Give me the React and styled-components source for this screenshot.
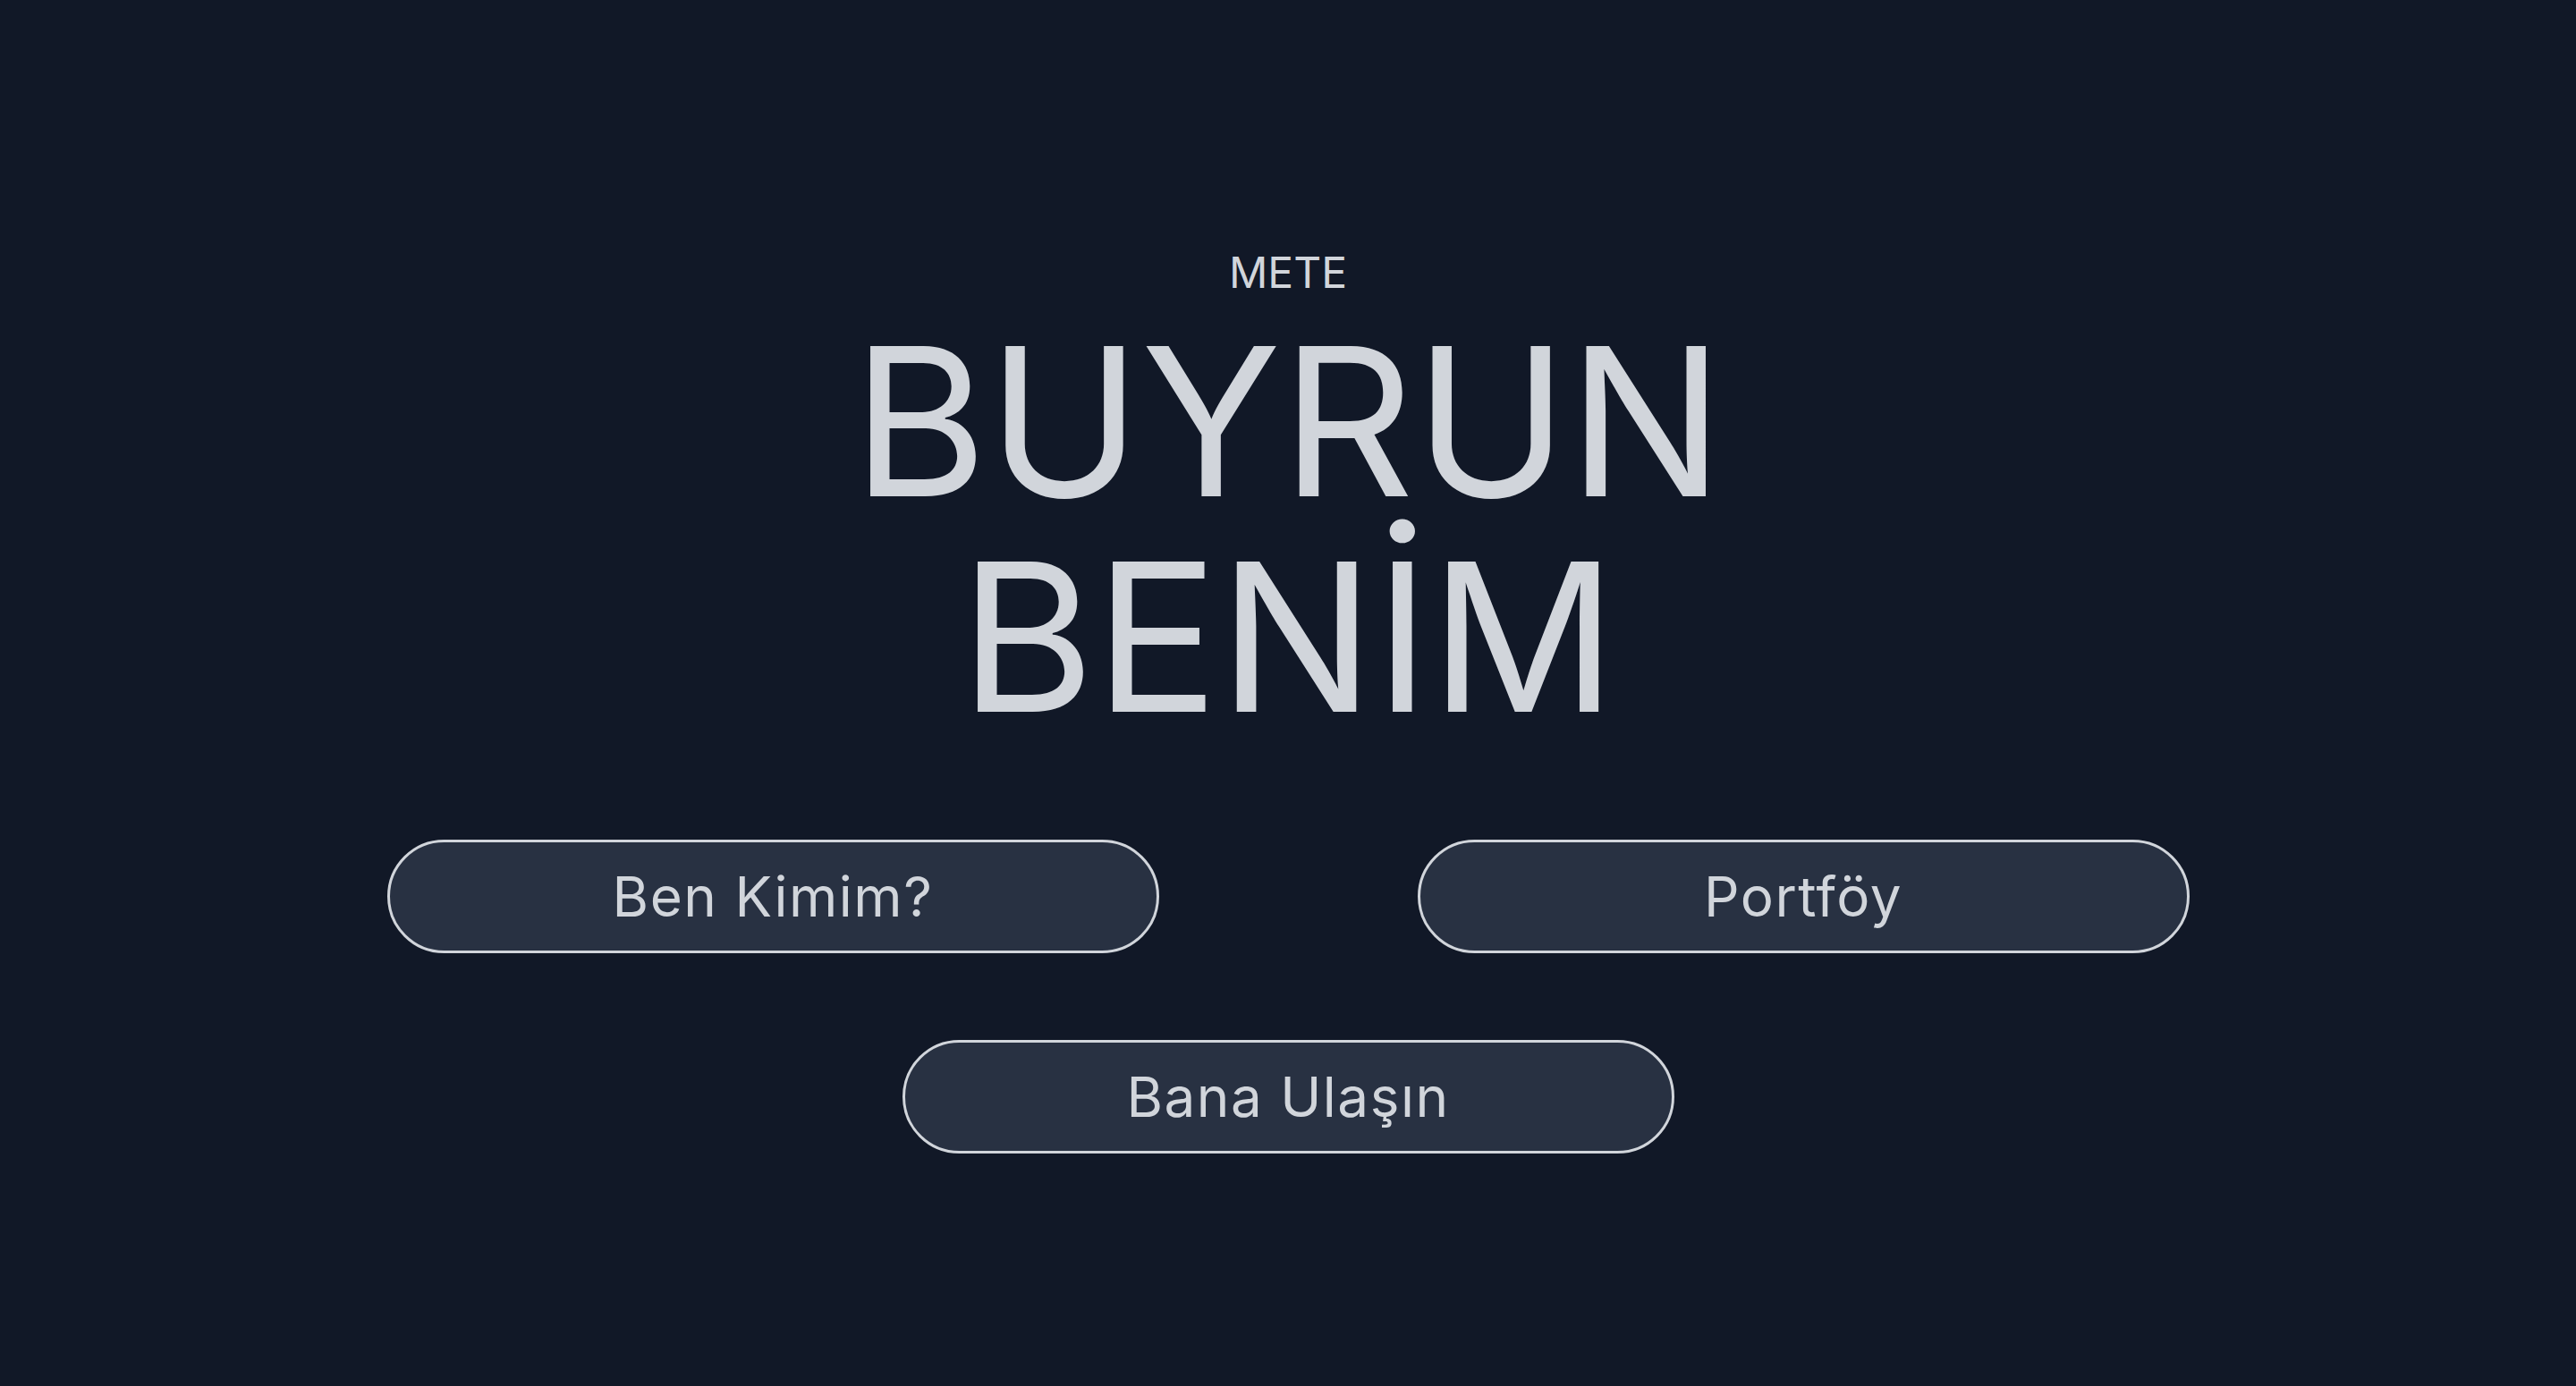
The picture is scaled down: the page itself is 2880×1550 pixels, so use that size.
import React from "react";
import styled, { createGlobalStyle } from "styled-components";

const GlobalStyle = createGlobalStyle`
  html, body {
    margin: 0;
    padding: 0;
    background: #111827;
  }
  body {
    font-family: Inter, "Liberation Sans", sans-serif;
    color: #d1d5db;
  }
`;

const Page = styled.main`
  min-height: 1550px;
  box-sizing: border-box;
  padding-top: 281px;
  display: flex;
  flex-direction: column;
  align-items: center;
  background: #111827;
`;

const Kicker = styled.p`
  margin: 0;
  font-size: 48px;
  line-height: 48px;
  font-weight: 400;
  color: #d1d5db;
  text-align: center;
`;

const Title = styled.h1`
  margin: 22px 0 0;
  font-size: 231px;
  line-height: 240.5px;
  font-weight: 400;
  color: #d1d5db;
  text-align: center;
`;

const ButtonGrid = styled.nav`
  margin-top: 107px;
  display: flex;
  flex-wrap: wrap;
  justify-content: center;
  column-gap: 289px;
  row-gap: 97px;
  width: 2015px;
`;

const NavButton = styled.a`
  box-sizing: border-box;
  width: 863px;
  height: 127px;
  display: flex;
  align-items: center;
  justify-content: center;
  border: 3px solid #d1d5db;
  border-radius: 64px;
  background: #283142;
  color: #d1d5db;
  font-size: 62px;
  font-weight: 400;
  letter-spacing: 1.5px;
  text-decoration: none;
  cursor: pointer;
`;

export default function App() {
  return (
    <>
      <GlobalStyle />
      <Page>
        <Kicker>METE</Kicker>
        <Title>
          BUYRUN
          <br />
          BENİM
        </Title>
        <ButtonGrid>
          <NavButton>Ben Kimim?</NavButton>
          <NavButton>Portföy</NavButton>
          <NavButton>Bana Ulaşın</NavButton>
        </ButtonGrid>
      </Page>
    </>
  );
}
